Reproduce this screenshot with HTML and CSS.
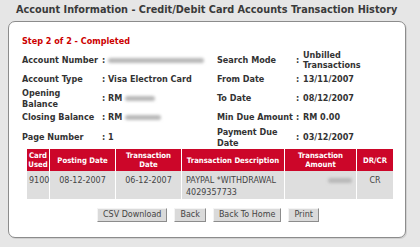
FILE: index.html
```html
<!DOCTYPE html>
<html>
<head>
<meta charset="utf-8">
<link rel="stylesheet" href="styles.css">
</head>
<body>
<div class="page">
  <h1 class="title">Account Information - Credit/Debit Card Accounts Transaction History</h1>
  <div class="panel">
    <div class="step">Step 2 of 2 - Completed</div>
    <div class="info">
      <div class="lbl">Account Number</div><div class="col">:</div><div class="val"><span class="blur blur-acc"></span></div>
      <div class="lbl">Search Mode</div><div class="col">:</div><div class="val">Unbilled<br>Transactions</div>

      <div class="lbl">Account Type</div><div class="col">:</div><div class="val">Visa Electron Card</div>
      <div class="lbl">From Date</div><div class="col">:</div><div class="val">13/11/2007</div>

      <div class="lbl">Opening<br>Balance</div><div class="col">:</div><div class="val">RM <span class="blur blur-rm1"></span></div>
      <div class="lbl">To Date</div><div class="col">:</div><div class="val">08/12/2007</div>

      <div class="lbl">Closing Balance</div><div class="col">:</div><div class="val">RM <span class="blur blur-rm2"></span></div>
      <div class="lbl">Min Due Amount</div><div class="col">:</div><div class="val">RM 0.00</div>

      <div class="lbl">Page Number</div><div class="col">:</div><div class="val">1</div>
      <div class="lbl">Payment Due<br>Date</div><div class="col">:</div><div class="val">03/12/2007</div>
    </div>
    <table class="tx">
      <thead>
        <tr>
          <th class="c1">Card<br>Used</th>
          <th class="c2">Posting Date</th>
          <th class="c3">Transaction<br>Date</th>
          <th class="c4">Transaction Description</th>
          <th class="c5">Transaction<br>Amount</th>
          <th class="c6">DR/CR</th>
        </tr>
      </thead>
      <tbody>
        <tr>
          <td class="c1">9100</td>
          <td class="c2 ctr">08-12-2007</td>
          <td class="c3 ctr">06-12-2007</td>
          <td class="c4">PAYPAL *WITHDRAWAL<br>4029357733</td>
          <td class="c5 amt"><span class="blur blur-amt"></span></td>
          <td class="c6 ctr">CR</td>
        </tr>
      </tbody>
    </table>
    <div class="buttons">
      <button class="btn">CSV Download</button>
      <button class="btn">Back</button>
      <button class="btn">Back To Home</button>
      <button class="btn">Print</button>
    </div>
  </div>
</div>
</body>
</html>
```
FILE: styles.css
```css
html, body {
  margin: 0;
  padding: 0;
}
body {
  background: #e6e6e6;
  font-family: "DejaVu Sans Condensed", "DejaVu Sans", sans-serif;
  font-stretch: condensed;
  width: 420px;
  height: 247px;
  overflow: hidden;
}
.page {
  padding: 0 0 0 8px;
}
.title {
  margin: 0;
  padding: 4px 0 0 8px;
  height: 17px;
  font-size: 10.8px;
  line-height: 12px;
  font-weight: bold;
  color: #3a3a3a;
  white-space: nowrap;
}
.panel {
  box-sizing: border-box;
  width: 398px;
  height: 217px;
  background: #fff;
  border: 1px solid #8c8c8c;
  border-radius: 7px;
  box-shadow: 1px 1px 0 #d0d0d0;
  padding: 13px 0 0 13px;
}
.step {
  color: #cc0000;
  font-weight: bold;
  font-size: 9px;
  line-height: 12px;
  height: 14px;
}
.info {
  display: grid;
  grid-template-columns: 80px 6px 109px 79px 7px 1fr;
  grid-template-rows: 20px 19px 19px 19px 21px;
  align-items: center;
  font-weight: bold;
  font-size: 9px;
  line-height: 10.5px;
  color: #333;
  white-space: nowrap;
  margin-top: 1px;
}
.blur {
  display: inline-block;
  height: 5px;
  background: #b8b8b8;
  filter: blur(1.5px);
  vertical-align: middle;
  border-radius: 3px;
}
.blur-acc { width: 96px; }
.blur-rm1 { width: 30px; }
.blur-rm2 { width: 36px; }
.blur-amt { width: 24px; }
.tx {
  border-collapse: collapse;
  table-layout: fixed;
  margin: 1px 0 0 5px;
  width: 361px;
}
.tx th {
  background: #cc0629;
  color: #fff;
  font-weight: bold;
  font-size: 7.7px;
  height: 22px;
  padding: 0;
  line-height: 9px;
  border-right: 1px solid #fff;
  text-align: center;
  white-space: nowrap;
}
.tx th:last-child, .tx td:last-child {
  border-right: none;
}
.tx td {
  background: #dedede;
  color: #444;
  height: 23px;
  font-size: 8px;
  line-height: 12px;
  vertical-align: top;
  padding: 4px 2px 0;
  border-right: 1px solid #fff;
  font-family: "DejaVu Sans", sans-serif;
  font-stretch: normal;
  white-space: nowrap;
}
.tx td.c4 { padding-left: 4px; }
.tx .ctr { text-align: center; }
.tx .amt { text-align: right; padding-right: 4px; }
.c1 { width: 22px; }
.c2 { width: 65px; }
.c3 { width: 65px; }
.c4 { width: 102px; }
.c5 { width: 71px; }
.c6 { width: 36px; }
.buttons {
  display: flex;
  gap: 7px;
  margin: 9px 0 0 75px;
}
.btn {
  font-family: "DejaVu Sans", sans-serif;
  font-stretch: normal;
  font-size: 8px;
  color: #444;
  background: #dadada;
  border: 1px solid;
  border-color: #f4f4f4 #8c8c8c #8c8c8c #f4f4f4;
  height: 14px;
  padding: 0 5px;
  line-height: 12px;
  border-radius: 0;
}
```
